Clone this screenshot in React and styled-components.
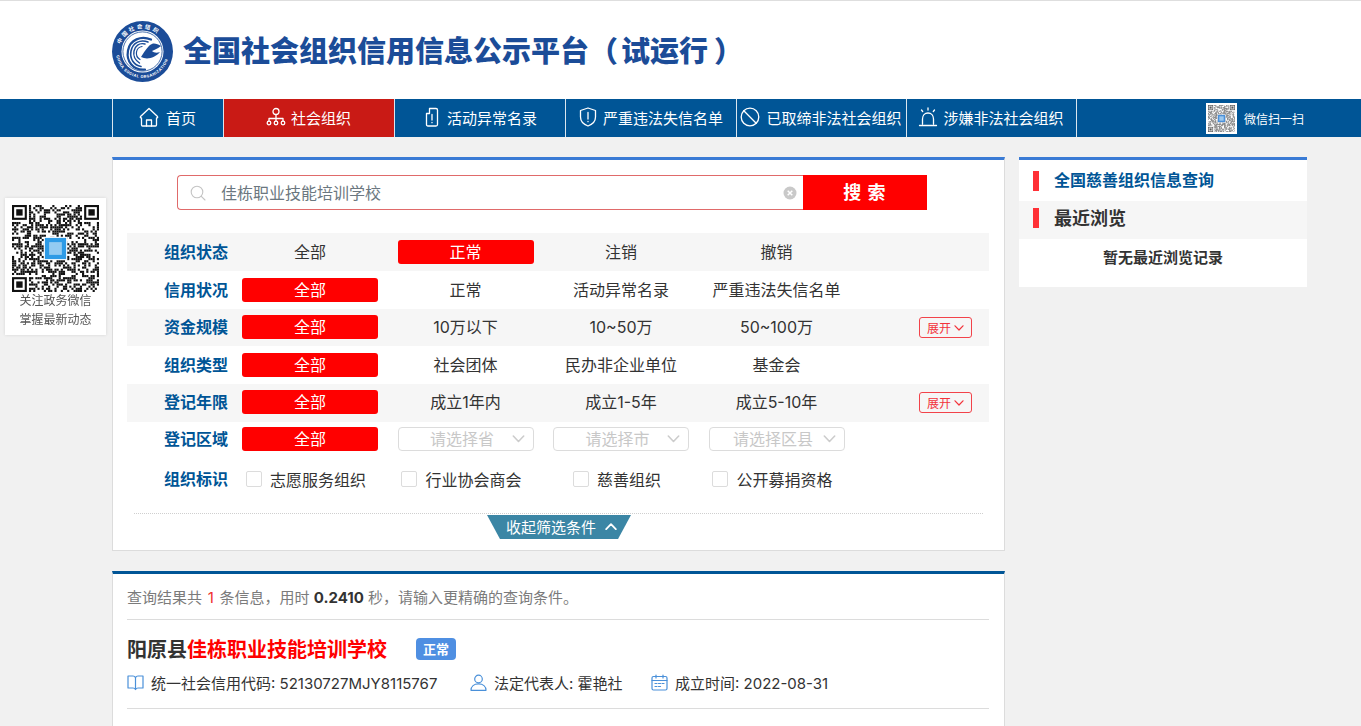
import React from 'react';
import styled, { createGlobalStyle } from 'styled-components';

const FONT = 'Inter, "Noto Sans CJK SC", "Noto Sans", sans-serif';
const NAVY = '#005596';
const RED = '#ff0000';

const GlobalStyle = createGlobalStyle`
  html, body {
    margin: 0;
    height: 100%;
    overflow: hidden;
    background: #f1f1f1;
    font-family: ${FONT};
    color: #333;
  }
  * { box-sizing: border-box; }
  input { font-family: ${FONT}; }
`;

const Header = styled.header`
  height: 99px;
  background: #fff;
  border-top: 1px solid #dedede;
  padding: 20px 0 0 112px;
  display: flex;
  align-items: flex-start;
  gap: 10px;
`;

const Title = styled.h1`
  margin: 14px 0 0;
  font-size: 29px;
  line-height: 34px;
  font-weight: 900;
  color: #1b4c98;
  white-space: nowrap;
`;

const Paren = styled.span`
  margin: 0 ${(p) => p.$right || 0}px 0 ${(p) => p.$left || 0}px;
`;

const NavBar = styled.nav`
  height: 38px;
  background: ${NAVY};
  padding-left: 112px;
  display: flex;
  align-items: stretch;
`;

const NavList = styled.div`
  display: flex;
  border-left: 1px solid #dbe6ef;
`;

const NavItem = styled.a`
  width: ${(p) => p.$w}px;
  display: flex;
  align-items: center;
  justify-content: center;
  gap: ${(p) => p.$gap || 5}px;
  padding: 0 1px 2px 0;
  border-right: 1px solid #dbe6ef;
  color: #fff;
  font-size: 15px;
  white-space: nowrap;
  background: ${(p) => (p.$active ? '#c91a15' : 'transparent')};
`;

const WechatScan = styled.div`
  margin-left: 129px;
  display: flex;
  align-items: center;
  gap: 7px;
  color: #fff;
  font-size: 12px;
`;

const WechatThumb = styled.div`
  width: 31px;
  height: 31px;
  background: #fff;
  padding: 2px;
  display: flex;
`;

const Main = styled.main`
  padding: 20px 0 0 112px;
  display: flex;
  align-items: flex-start;
  gap: 14px;
`;

const Column = styled.div`
  width: 893px;
  display: flex;
  flex-direction: column;
  gap: 20px;
`;

const Panel = styled.section`
  background: #fff;
  border: 1px solid #dcdcdc;
  border-top: 3px solid ${(p) => p.$accent};
  padding: ${(p) => p.$pad};
`;

const SearchRow = styled.div`
  margin-left: 50px;
  width: 750px;
  height: 35px;
  display: flex;
`;

const SearchBox = styled.div`
  flex: 1;
  display: flex;
  align-items: center;
  padding: 0 6px 0 12px;
  border: 1px solid #e06a6a;
  border-right: 0;
  border-radius: 4px 0 0 4px;
`;

const SearchInput = styled.input`
  flex: 1;
  margin-left: 15px;
  border: 0;
  outline: 0;
  padding: 0 0 2px;
  font-size: 16px;
  color: #6b7780;
  background: transparent;
`;

const SearchButton = styled.button`
  width: 124px;
  border: 0;
  padding: 0 0 3px;
  background: ${RED};
  color: #fff;
  font-family: ${FONT};
  font-size: 18px;
  font-weight: 700;
  letter-spacing: 1px;
`;

const FilterTable = styled.div`
  margin-top: 23px;
  width: 862px;
`;

const FilterRow = styled.div`
  height: ${(p) => p.$h}px;
  padding-bottom: ${(p) => p.$pb || 0}px;
  display: grid;
  grid-template-columns: 95.5px repeat(4, 136px) 1fr;
  column-gap: 19.5px;
  align-items: center;
  background: ${(p) => (p.$shade ? '#f6f6f6' : 'transparent')};
`;

const FilterLabel = styled.div`
  padding: 0 0 2px 37px;
  font-size: 16px;
  font-weight: 700;
  color: ${NAVY};
  white-space: nowrap;
`;

const Chip = styled.div`
  height: 24px;
  line-height: 24px;
  border-radius: 3px;
  text-align: center;
  font-size: 16px;
  white-space: nowrap;
  color: ${(p) => (p.$on ? '#fff' : '#333')};
  background: ${(p) => (p.$on ? RED : 'transparent')};
`;

const ExpandButton = styled.div`
  justify-self: end;
  margin: 1px 17px 0 0;
  width: 53px;
  height: 21px;
  border: 1px solid #f2434a;
  border-radius: 3px;
  display: flex;
  align-items: center;
  justify-content: center;
  gap: 3px;
  color: #f2333a;
  font-size: 12px;
`;

const SelectBox = styled.div`
  position: relative;
  height: 24px;
  line-height: 22px;
  border: 1px solid #dcdcdc;
  border-radius: 4px;
  padding-right: 7px;
  text-align: center;
  font-size: 16px;
  color: #c8c8c8;
  white-space: nowrap;
`;

const SelectArrow = styled.span`
  position: absolute;
  right: 8px;
  top: 7px;
  display: flex;
`;

const CheckCell = styled.label`
  display: flex;
  align-items: center;
  justify-content: center;
  gap: 8px;
  padding-right: 8px;
  font-size: 16px;
  color: #333;
  white-space: nowrap;
`;

const CheckMark = styled.span`
  width: 16px;
  height: 16px;
  border: 1px solid #dcdcdc;
  border-radius: 2px;
  background: #fff;
`;

const Divider = styled.div`
  margin: 12px 6px 0 7px;
  border-top: 1px dotted #cfcfcf;
`;

const CollapseTab = styled.div`
  margin: 1px auto 0;
  position: relative;
  left: 1px;
  width: 144px;
  height: 24px;
  display: flex;
  align-items: center;
  justify-content: center;
  gap: 9px;
  padding: 0 0 1px 5px;
  color: #fff;
  font-size: 15px;
  background: #3b86a5;
  clip-path: polygon(0 0, 100% 0, 91% 100%, 9% 100%);
`;

const ResultSummary = styled.div`
  height: 46px;
  line-height: 48px;
  font-size: 15px;
  color: #7b7b7b;
  border-bottom: 1px solid #dcdcdc;
  width: 862px;
  white-space: pre;
`;

const Count = styled.span`
  margin: 0 1.5px;
  color: #f0302f;
`;

const Timing = styled.b`
  color: #333;
`;

const ResultItem = styled.article`
  width: 862px;
  height: 89px;
  padding-top: 14px;
  border-bottom: 1px solid #dcdcdc;
`;

const ResultHead = styled.div`
  display: flex;
  align-items: center;
  gap: 29px;
  height: 30px;
`;

const ResultName = styled.h3`
  margin: 0;
  padding-bottom: 2px;
  font-size: 20px;
  font-weight: 700;
  color: #333;
`;

const Highlight = styled.span`
  color: ${RED};
`;

const StatusBadge = styled.span`
  width: 40px;
  height: 22px;
  line-height: 22px;
  border-radius: 4px;
  background: #4f8fe2;
  color: #fff;
  font-size: 13px;
  font-weight: 700;
  text-align: center;
`;

const MetaRow = styled.div`
  margin-top: 8px;
  display: flex;
  align-items: center;
`;

const MetaItem = styled.div`
  width: ${(p) => p.$w}px;
  display: flex;
  align-items: center;
  gap: 7px;
  font-size: 15px;
  color: #333;
  white-space: nowrap;
`;

const Sidebar = styled.aside`
  width: 288px;
  height: 130px;
  background: #fff;
  border-top: 3px solid #3a7bd5;
`;

const SideRow = styled.div`
  height: ${(p) => p.$h}px;
  padding: 0 0 ${(p) => p.$pb || 0}px 14px;
  display: flex;
  align-items: center;
  gap: 15px;
  background: ${(p) => (p.$shade ? '#f6f6f6' : '#fff')};
  font-size: ${(p) => p.$size}px;
  font-weight: 700;
  color: ${(p) => p.$color};
`;

const SideMark = styled.span`
  width: 6px;
  height: 20px;
  background: #ff3036;
`;

const SideText = styled.span`
  padding-bottom: ${(p) => p.$lift}px;
`;

const SideEmpty = styled.div`
  padding-top: 7px;
  text-align: center;
  font-size: 15px;
  font-weight: 700;
  color: #333;
`;

const FloatCard = styled.div`
  position: fixed;
  left: 5px;
  top: 198px;
  width: 101px;
  height: 137px;
  padding-top: 7px;
  background: #fff;
  box-shadow: 0 0 3px rgba(0, 0, 0, 0.12);
  text-align: center;
`;

const FloatQr = styled.div`
  width: 87px;
  height: 87px;
  margin: 0 auto;
`;

const FloatCaption = styled.div`
  margin-top: -1px;
  font-size: 12px;
  line-height: 19px;
  color: #555;
`;

// finder squares + a pseudo random body, the real code can't be read anyway
const QrCode = ({ n = 41, seed = 7, logo = '#2e9be6', ink = '#111' }) => {
  const cells = [];
  let s = seed;
  const inFinder = (x, y) =>
    (x < 8 && y < 8) || (x >= n - 8 && y < 8) || (x < 8 && y >= n - 8);
  for (let y = 0; y < n; y++) {
    for (let x = 0; x < n; x++) {
      s = (s * 1103515245 + 12345) & 0x7fffffff;
      if (!inFinder(x, y) && (s >> 16) % 100 < 50) {
        cells.push(<rect key={`${x}-${y}`} x={x} y={y} width="1" height="1" />);
      }
    }
  }
  const finder = (x, y) => (
    <g key={`f${x}${y}`}>
      <rect x={x} y={y} width="7" height="7" />
      <rect x={x + 1} y={y + 1} width="5" height="5" fill="#fff" />
      <rect x={x + 2} y={y + 2} width="3" height="3" />
    </g>
  );
  const mid = n / 2;
  return (
    <svg viewBox={`0 0 ${n} ${n}`} width="100%" height="100%" fill={ink}>
      {cells}
      {finder(0, 0)}
      {finder(n - 7, 0)}
      {finder(0, n - 7)}
      <rect x={mid - 5.5} y={mid - 5.5} width="11" height="11" fill="#fff" />
      <rect x={mid - 5} y={mid - 5} width="10" height="10" fill={logo} />
      <rect x={mid - 3} y={mid - 3} width="6" height="6" fill="#bfe0f7" opacity="0.7" />
    </svg>
  );
};

const Logo = () => (
  <svg width="61" height="61" viewBox="0 0 61 61">
    <defs>
      <path id="logoTop" d="M7.500 30.500a23 23 0 0 1 46 0" />
      <path id="logoBottom" d="M4 30.500a26.500 26.500 0 0 0 53 0" />
    </defs>
    <circle cx="30.500" cy="30.500" r="30.500" fill="#1b4c98" />
    <circle cx="30.500" cy="30.500" r="21" fill="#fff" />
    <circle cx="30.500" cy="30.500" r="19.600" fill="none" stroke="#1b4c98" strokeWidth="0.8" />
    <text fontFamily={FONT} fontSize="5.500" fontWeight="700" fill="#fff" letterSpacing="2.200">
      <textPath href="#logoTop" startOffset="10%">中国社会组织</textPath>
    </text>
    <text fontFamily={FONT} fontSize="3.800" fontWeight="700" fill="#fff" letterSpacing="0.500">
      <textPath href="#logoBottom" startOffset="5%">CHINA SOCIAL ORGANIZATION</textPath>
    </text>
    <g fill="none" stroke="#1b4c98" strokeLinecap="round">
      <path d="M39 18.500c-10-4-21 0-23 11s5 20 17 19" strokeWidth="2.200" />
      <path d="M36 21c-8-3-15.500 1-17 9s3 14 10 15.500" strokeWidth="1.600" />
      <path d="M33 23c-6-1.500-10 2-11 7s1 9 5.500 12" strokeWidth="1.400" />
      <path d="M30 25.500c-3 .5-5 2.500-5.500 5.500s1 6 3.500 7.500" strokeWidth="1.200" />
    </g>
    <path d="M29 36c6 3 14 1 19-5-3 1-6 1-8-1 2-1 5-2 9-5-3-2-7-3-9-2-3 1-6 5-11 13z" fill="#1b4c98" />
  </svg>
);

const Line = ({ size = 20, children, sw = 1.3, color = '#fff', vb = 20 }) => (
  <svg width={size} height={size} viewBox={`0 0 ${vb} ${vb}`} fill="none" stroke={color} strokeWidth={sw} strokeLinecap="round" strokeLinejoin="round">
    {children}
  </svg>
);

const HomeIcon = () => (
  <Line>
    <path d="M10 1.500 1.500 9.500c-.5.800 0 1.500 1 1.500v7c0 .5.500 1 1 1h13c.5 0 1-.5 1-1v-7c1 0 1.500-.7 1-1.500z" />
    <path d="M7.500 19v-6h5v6" />
  </Line>
);

const OrgIcon = () => (
  <Line>
    <circle cx="10" cy="4.500" r="3" />
    <path d="M10 7.500V14M3 14v-2.500h14V14" />
    <circle cx="3" cy="16" r="1.800" />
    <circle cx="10" cy="16" r="1.800" />
    <circle cx="17" cy="16" r="1.800" />
  </Line>
);

const DocIcon = () => (
  <Line>
    <path d="M7.500 1.500H14c1 0 1.500.5 1.500 1.500v14.500c0 1-.5 1.500-1.500 1.500H6c-1 0-1.500-.5-1.500-1.500V6.500h3z" />
    <path d="M10 7.500v5.500M10 15.300v.4" />
  </Line>
);

const ShieldIcon = () => (
  <Line>
    <path d="M10 1 2.500 3.500v6.500c0 4.500 3.500 7.500 7.500 9 4-1.500 7.500-4.500 7.500-9V3.500z" />
    <path d="M10 5.500v6.500M10 14.300v.4" />
  </Line>
);

const BanIcon = () => (
  <Line>
    <circle cx="10" cy="10" r="8.800" />
    <path d="M3.800 3.800 16.200 16.200" />
  </Line>
);

const SirenIcon = () => (
  <Line>
    <path d="M4.500 17V12c0-3.500 2.300-6 5.500-6s5.500 2.500 5.500 6v5M1.500 18.500h17" />
    <path d="M10 1v2M3.500 3l1.200 1.500M16.500 3l-1.200 1.500" />
  </Line>
);

const Chevron = ({ w = 12, color = '#ccc', up, sw = 1.2 }) => (
  <svg width={w} height={w * 0.6} viewBox="0 0 10 6" fill="none" stroke={color} strokeWidth={sw} strokeLinecap="round" strokeLinejoin="round">
    <path d={up ? 'M1 5.200 5 1l4 4.200' : 'M1 .8 5 5l4-4.200'} />
  </svg>
);

const BookIcon = () => (
  <Line size={17} color="#4a90d9" sw={1.2} vb={17}>
    <path d="M1 2h5c1 0 2 .5 2.500 1.500C9 2.500 10 2 11 2h5v12h-5c-1 0-2 .5-2.500 1.500C8 14.500 7 14 6 14H1z" />
    <path d="M8.500 3.500V15" />
  </Line>
);

const UserIcon = () => (
  <Line size={17} color="#4a90d9" sw={1.2} vb={17}>
    <circle cx="8.500" cy="5" r="3.800" />
    <path d="M1 16.300c0-3.800 3-6.500 7.500-6.500s7.500 2.700 7.500 6.500z" />
  </Line>
);

const CalendarIcon = () => (
  <Line size={17} color="#4a90d9" sw={1.2} vb={17}>
    <rect x="1" y="2.500" width="15" height="13.500" rx="1.500" />
    <path d="M1 6.500h15M5 1v3M12 1v3M4 9.500h2M7.500 9.500h2M11 9.500h2M4 12.500h2M7.500 12.500h2" />
  </Line>
);

const SearchIcon = () => (
  <svg width="16" height="16" viewBox="0 0 16 16" fill="none" stroke="#c4c4c4" strokeWidth="1.100" strokeLinecap="round">
    <circle cx="7" cy="7" r="5.800" />
    <path d="M11.300 11.300 15 15" />
  </svg>
);

const ClearIcon = () => (
  <svg width="14" height="14" viewBox="0 0 14 14">
    <circle cx="7" cy="7" r="6.500" fill="#c9c9c9" />
    <path d="M4.700 4.700 9.300 9.300M9.300 4.700 4.700 9.300" stroke="#fff" strokeWidth="1.500" />
  </svg>
);

const navItems = [
  { text: '首页', w: 111, gap: 7, icon: <HomeIcon /> },
  { text: '社会组织', w: 171, active: true, icon: <OrgIcon /> },
  { text: '活动异常名录', w: 171, icon: <DocIcon /> },
  { text: '严重违法失信名单', w: 171, icon: <ShieldIcon /> },
  { text: '已取缔非法社会组织', w: 170, gap: 6, icon: <BanIcon /> },
  { text: '涉嫌非法社会组织', w: 170, icon: <SirenIcon /> },
];

const filterRows = [
  { label: '组织状态', h: 38, active: 1, items: ['全部', '正常', '注销', '撤销'] },
  { label: '信用状况', h: 38, active: 0, items: ['全部', '正常', '活动异常名录', '严重违法失信名单'] },
  { label: '资金规模', h: 37, pb: 1, active: 0, items: ['全部', '10万以下', '10~50万', '50~100万'], more: true },
  { label: '组织类型', h: 38, active: 0, items: ['全部', '社会团体', '民办非企业单位', '基金会'] },
  { label: '登记年限', h: 38, pb: 2, active: 0, items: ['全部', '成立1年内', '成立1-5年', '成立5-10年'], more: true },
];

const App = () => (
  <>
    <GlobalStyle />
    <Header>
      <Logo />
      <Title>
        全国社会组织信用信息公示平台<Paren $right={3}>（</Paren>试运行<Paren $left={6}>）</Paren>
      </Title>
    </Header>

    <NavBar>
      <NavList>
        {navItems.map((item) => (
          <NavItem key={item.text} $w={item.w} $gap={item.gap} $active={item.active}>
            {item.icon}
            {item.text}
          </NavItem>
        ))}
      </NavList>
      <WechatScan>
        <WechatThumb>
          <QrCode n={37} seed={21} logo="#4a90d9" ink="#5a5a5a" />
        </WechatThumb>
        微信扫一扫
      </WechatScan>
    </NavBar>

    <FloatCard>
      <FloatQr>
        <QrCode />
      </FloatQr>
      <FloatCaption>
        关注政务微信
        <br />
        掌握最新动态
      </FloatCaption>
    </FloatCard>

    <Main>
      <Column>
        <Panel $accent="#3a7bd5" $pad="15px 0 11px 14px">
          <SearchRow>
            <SearchBox>
              <SearchIcon />
              <SearchInput readOnly value="佳栋职业技能培训学校" />
              <ClearIcon />
            </SearchBox>
            <SearchButton>搜&nbsp;索</SearchButton>
          </SearchRow>

          <FilterTable>
            {filterRows.map((row, i) => (
              <FilterRow key={row.label} $h={row.h} $pb={row.pb} $shade={i % 2 === 0}>
                <FilterLabel>{row.label}</FilterLabel>
                {row.items.map((text, j) => (
                  <Chip key={text} $on={j === row.active}>
                    {text}
                  </Chip>
                ))}
                {row.more && (
                  <ExpandButton>
                    展开
                    <Chevron w={10} color="#f2333a" />
                  </ExpandButton>
                )}
              </FilterRow>
            ))}
            <FilterRow $h={37} $pb={3}>
              <FilterLabel>登记区域</FilterLabel>
              <Chip $on>全部</Chip>
              {['请选择省', '请选择市', '请选择区县'].map((text) => (
                <SelectBox key={text}>
                  {text}
                  <SelectArrow>
                    <Chevron w={13} />
                  </SelectArrow>
                </SelectBox>
              ))}
            </FilterRow>
            <FilterRow $h={42} $pb={2}>
              <FilterLabel>组织标识</FilterLabel>
              {['志愿服务组织', '行业协会商会', '慈善组织', '公开募捐资格'].map((text) => (
                <CheckCell key={text}>
                  <CheckMark />
                  {text}
                </CheckCell>
              ))}
            </FilterRow>
            <Divider />
            <CollapseTab>
              收起筛选条件
              <Chevron w={12} color="#fff" up sw={1.5} />
            </CollapseTab>
          </FilterTable>
        </Panel>

        <Panel $accent={NAVY} $pad="0 0 40px 14px">
          <ResultSummary>
            查询结果共 <Count>1</Count> 条信息，用时 <Timing>0.2410</Timing> 秒，请输入更精确的查询条件。
          </ResultSummary>
          <ResultItem>
            <ResultHead>
              <ResultName>
                阳原县<Highlight>佳栋职业技能培训学校</Highlight>
              </ResultName>
              <StatusBadge>正常</StatusBadge>
            </ResultHead>
            <MetaRow>
              <MetaItem $w={343}>
                <BookIcon />
                统一社会信用代码: 52130727MJY8115767
              </MetaItem>
              <MetaItem $w={181}>
                <UserIcon />
                法定代表人: 霍艳社
              </MetaItem>
              <MetaItem $w={200}>
                <CalendarIcon />
                成立时间: 2022-08-31
              </MetaItem>
            </MetaRow>
          </ResultItem>
        </Panel>
      </Column>

      <Sidebar>
        <SideRow $h={41} $size={16} $color={NAVY}>
          <SideMark />
          <SideText $lift={4}>全国慈善组织信息查询</SideText>
        </SideRow>
        <SideRow $h={38} $pb={4} $size={18} $color="#333" $shade>
          <SideMark />
          <SideText $lift={2}>最近浏览</SideText>
        </SideRow>
        <SideEmpty>暂无最近浏览记录</SideEmpty>
      </Sidebar>
    </Main>
  </>
);

export default App;
